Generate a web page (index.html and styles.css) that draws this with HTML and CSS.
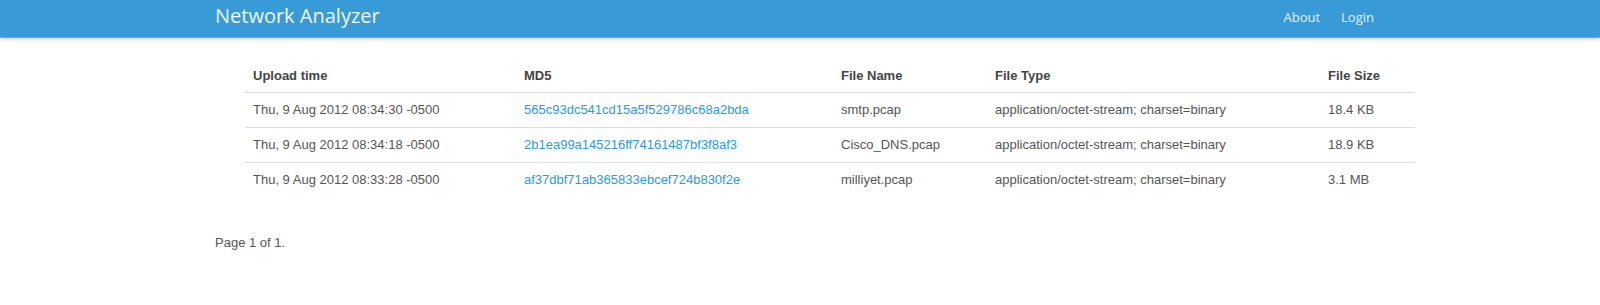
FILE: index.html
```html
<!DOCTYPE html>
<html lang="en">
<head>
  <meta charset="utf-8" />
  <title>Network Analyzer</title>
  <link rel="stylesheet" href="styles.css">
</head>
<body>
  <div class="navbar">
    <div class="container nav-inner">
      <a class="brand" href="#">Network Analyzer</a>
      <ul class="nav">
        <li><a href="#">About</a></li>
        <li><a href="#">Login</a></li>
      </ul>
    </div>
  </div>

  <div class="container main">
    <table class="table">
      <colgroup>
        <col class="c-time"><col class="c-md5"><col class="c-name"><col class="c-type"><col class="c-size">
      </colgroup>
      <thead>
        <tr>
          <th>Upload time</th>
          <th>MD5</th>
          <th>File Name</th>
          <th>File Type</th>
          <th>File Size</th>
        </tr>
      </thead>
      <tbody>
        <tr>
          <td>Thu, 9 Aug 2012 08:34:30 -0500</td>
          <td><a href="#">565c93dc541cd15a5f529786c68a2bda</a></td>
          <td>smtp.pcap</td>
          <td>application/octet-stream; charset=binary</td>
          <td>18.4 KB</td>
        </tr>
        <tr>
          <td>Thu, 9 Aug 2012 08:34:18 -0500</td>
          <td><a href="#">2b1ea99a145216ff74161487bf3f8af3</a></td>
          <td>Cisco_DNS.pcap</td>
          <td>application/octet-stream; charset=binary</td>
          <td>18.9 KB</td>
        </tr>
        <tr>
          <td>Thu, 9 Aug 2012 08:33:28 -0500</td>
          <td><a href="#">af37dbf71ab365833ebcef724b830f2e</a></td>
          <td>milliyet.pcap</td>
          <td>application/octet-stream; charset=binary</td>
          <td>3.1 MB</td>
        </tr>
      </tbody>
    </table>

    <p class="pager">Page 1 of 1.</p>
  </div>
</body>
</html>
```

FILE: styles.css
```css
*{box-sizing:border-box;}
body{
  margin:0;
  font-family:"Liberation Sans", Arial, sans-serif;
  font-size:13px;
  line-height:18px;
  color:#555;
  background:#fff;
}
a{color:#2b9ae0;text-decoration:none;}
.container{width:1170px;margin:0 auto;}

.navbar{
  height:38px;
  background:#389bd7;
  border-bottom:1px solid #5bb0e2;
  box-shadow:0 1px 4px rgba(0,0,0,.22);
}
.nav-inner{display:flex;align-items:center;justify-content:space-between;height:37px;}
.brand{
  font-family:"Open Sans", "DejaVu Sans", sans-serif;
  font-size:20px;
  color:#f2f6fa;
  margin-top:-5px;
}
.nav{display:flex;list-style:none;margin:-4px 0 0;padding:0 1px 0 0;}
.nav li a{
  display:block;
  font-family:"Open Sans", "DejaVu Sans", sans-serif;
  font-size:13px;
  color:#e6eef6;
  padding:0 10px;
  margin-left:1px;
}

.main{padding-top:20px;}
.table{
  width:1170px;
  margin-left:30px;
  border-collapse:collapse;
  table-layout:fixed;
}
.c-time{width:271px;}
.c-md5{width:317px;}
.c-name{width:154px;}
.c-type{width:333px;}
.c-size{width:95px;}
.table th,
.table td{
  text-align:left;
  padding:8px;
  line-height:18px;
  vertical-align:top;
  white-space:nowrap;
}
.table th{font-weight:bold;color:#444;padding-top:9px;padding-bottom:7px;}
.table td{border-top:1px solid #ddd;}

.pager{margin:37px 0 0;}
```
